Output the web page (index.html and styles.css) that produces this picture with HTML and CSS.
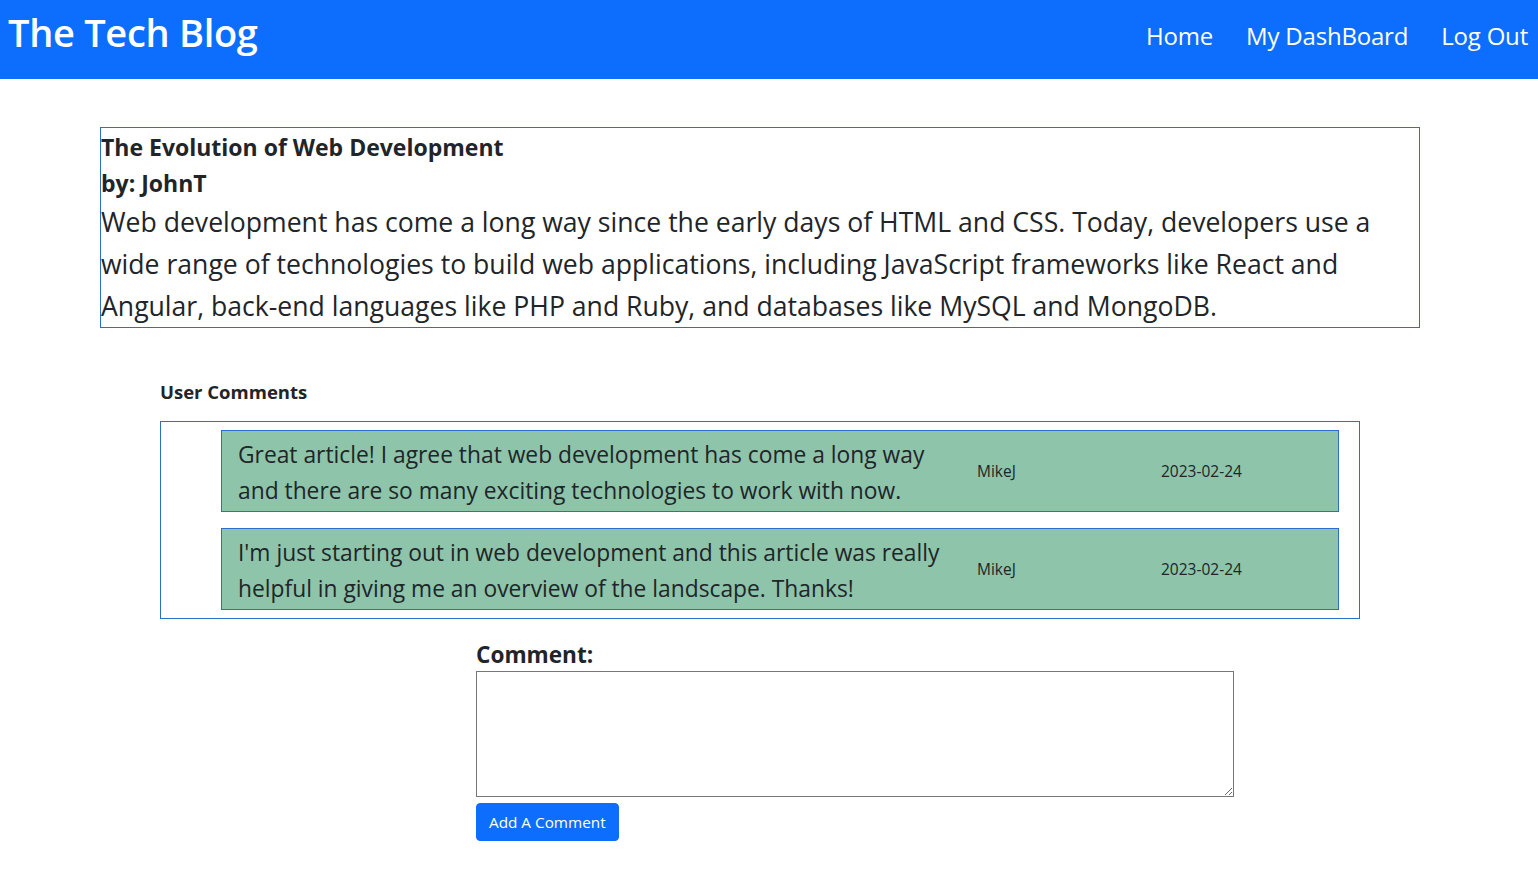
FILE: index.html
```html
<!DOCTYPE html>
<html lang="en">
<head>
<meta charset="utf-8">
<title>The Tech Blog</title>
<link rel="stylesheet" href="styles.css">
</head>
<body>
<header class="navbar">
  <h1 class="brand">The Tech Blog</h1>
  <nav class="nav">
    <a href="#" class="nav-link">Home</a>
    <a href="#" class="nav-link">My DashBoard</a>
    <a href="#" class="nav-link">Log Out</a>
  </nav>
</header>
<main class="main">
  <article class="post">
    <h2 class="post-title">The Evolution of Web Development</h2>
    <h3 class="post-author">by: JohnT</h3>
    <p class="post-body">Web development has come a long way since the early days of HTML and CSS. Today, developers use a wide range of technologies to build web applications, including JavaScript frameworks like React and Angular, back-end languages like PHP and Ruby, and databases like MySQL and MongoDB.</p>
  </article>
  <section class="comments">
    <h4 class="comments-heading">User Comments</h4>
    <div class="comment-list">
      <div class="comment">
        <p class="comment-text">Great article! I agree that web development has come a long way and there are so many exciting technologies to work with now.</p>
        <span class="comment-meta">MikeJ</span>
        <span class="comment-meta">2023-02-24</span>
      </div>
      <div class="comment">
        <p class="comment-text">I'm just starting out in web development and this article was really helpful in giving me an overview of the landscape. Thanks!</p>
        <span class="comment-meta">MikeJ</span>
        <span class="comment-meta">2023-02-24</span>
      </div>
    </div>
  </section>
  <form class="comment-form">
    <label class="form-label" for="comment">Comment:</label>
    <textarea id="comment" class="form-textarea"></textarea>
    <button type="button" class="btn">Add A Comment</button>
  </form>
</main>
</body>
</html>
```
FILE: styles.css
```css
* { box-sizing: border-box; }
html, body { margin: 0; padding: 0; }
body {
  font-family: "Open Sans", "Noto Sans", "Liberation Sans", sans-serif;
  color: #212529;
  background: #fff;
  width: 1538px;
}
.navbar {
  background: #0d6efd;
  height: 79px;
  display: flex;
  align-items: center;
  justify-content: space-between;
  padding: 0 10px 0 8px;
}
.brand {
  margin: 0;
  color: #fff;
  font-size: 38px;
  font-weight: 600;
  letter-spacing: -0.3px;
  line-height: 1;
  padding-bottom: 16px;
}
.nav {
  display: flex;
  gap: 33px;
  padding-bottom: 8px;
}
.nav-link {
  color: #fff;
  text-decoration: none;
  font-size: 24px;
  letter-spacing: -0.2px;
}
.main { padding-top: 48px; }
.post {
  margin: 0 0 0 100px;
  width: 1320px;
  height: 201px;
  border: 1px solid #2a6fc9;
}
.post-title, .post-author {
  margin: 0;
  font-size: 23px;
  line-height: 36px;
  font-weight: 700;
  padding-top: 1px;
  height: 36px;
}
.post-body {
  margin: 0;
  font-size: 26.6px;
  line-height: 42px;
  padding-top: 1px;
  height: 127px;
}
.comments {
  margin: 50px 0 0 160px;
  width: 1200px;
}
.comments-heading {
  margin: 0 0 16px;
  font-size: 18.5px;
  line-height: 27px;
  font-weight: 700;
}
.comment-list {
  border: 1px solid #2a6fc9;
  padding: 8px 20px 8px 60px;
  display: flex;
  flex-direction: column;
  gap: 16px;
}
.comment {
  background: #8dc4aa;
  border: 1px solid #2a6fc9;
  padding: 6px 16px 2px;
  display: grid;
  grid-template-columns: 739px 184px 1fr;
  align-items: center;
}
.comment-text {
  margin: 0;
  font-size: 22.8px;
  line-height: 36px;
  padding-right: 20px;
}
.comment-meta {
  font-size: 15.5px;
  line-height: 21px;
  padding-bottom: 4px;
}
.comment-form {
  margin: 20px 0 0 476px;
  width: 758px;
  display: flex;
  flex-direction: column;
  align-items: flex-start;
}
.form-label {
  font-size: 22.6px;
  line-height: 32px;
  font-weight: 700;
}
.form-textarea {
  width: 758px;
  height: 126px;
  border: 1px solid #767676;
  margin: 0;
  font-family: inherit;
}
.btn {
  margin-top: 6px;
  background: #0d6efd;
  color: #fff;
  border: 1px solid #0d6efd;
  border-radius: 4px;
  padding: 6px 12px;
  font-family: inherit;
  font-size: 15.3px;
  line-height: 24px;
  height: 38px;
}
```
